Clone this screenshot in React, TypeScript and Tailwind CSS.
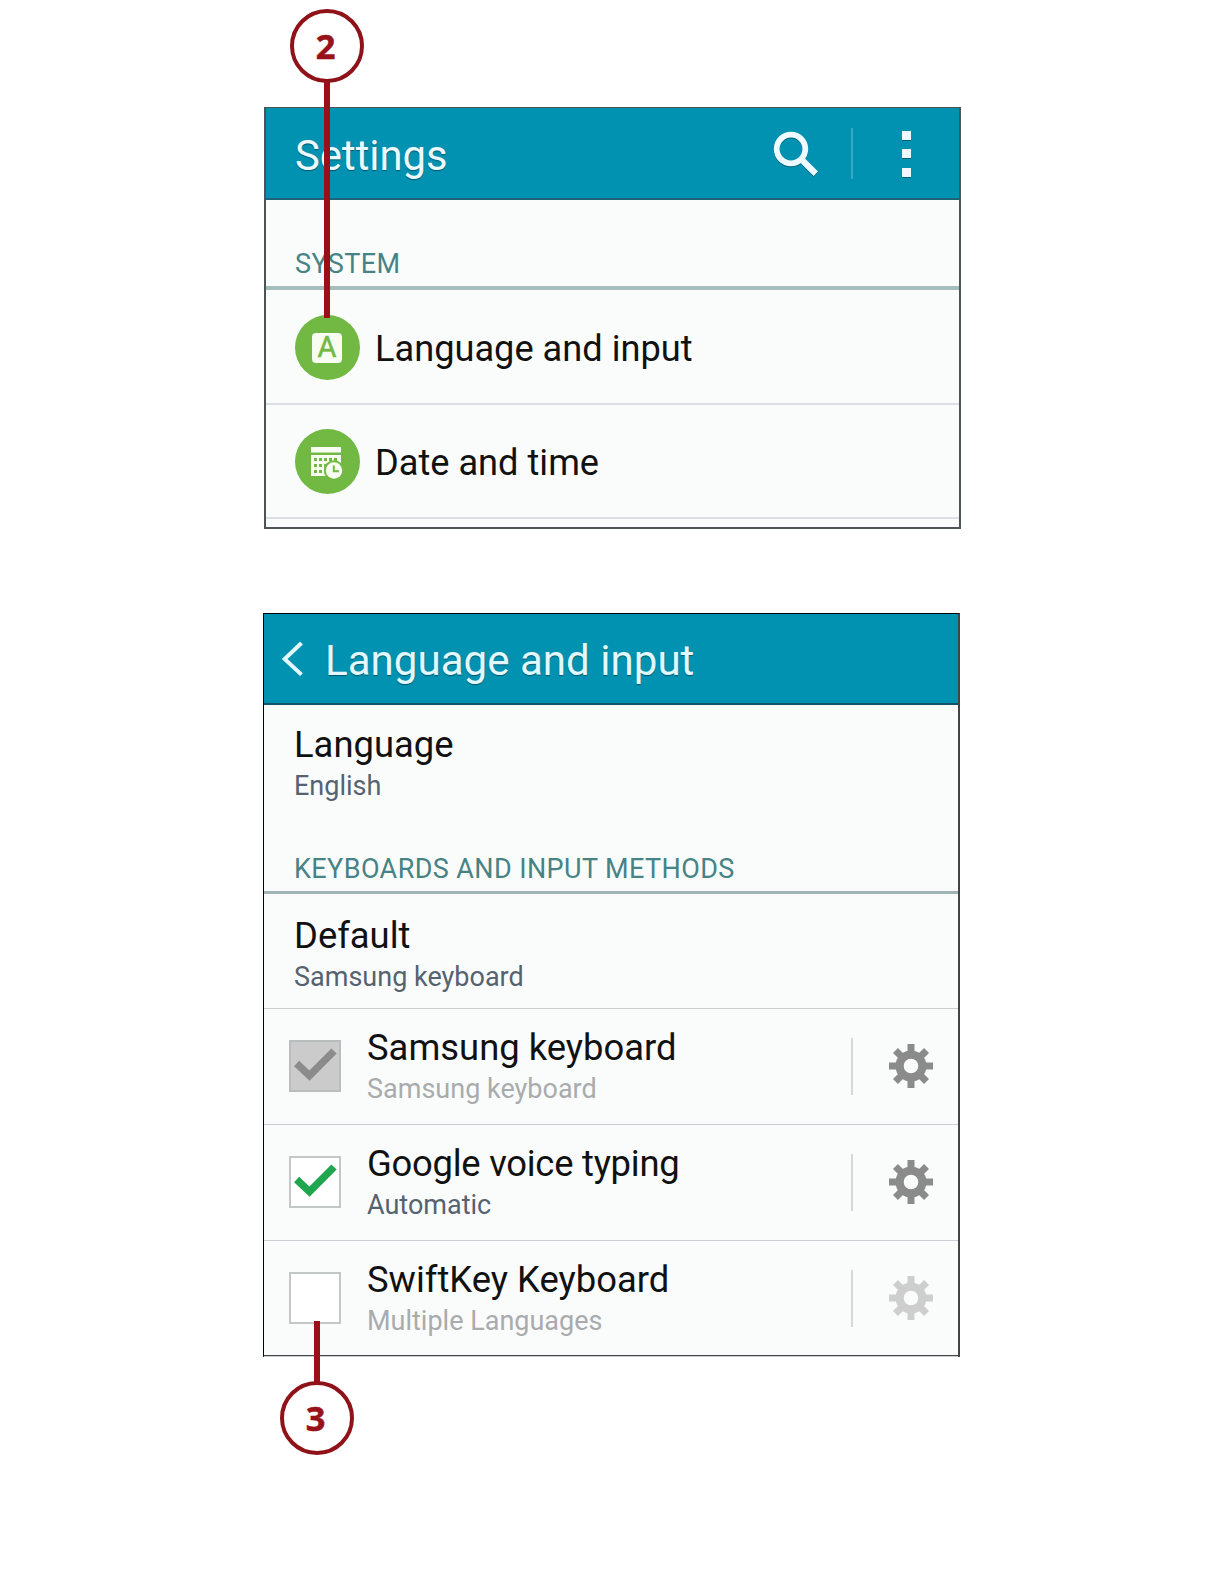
import clsx from "clsx";
import React from "react";

const TEETH = [0, 45, 90, 135, 180, 225, 270, 315];

const GearIcon = ({ className }: { className?: string }) => (
  <svg viewBox="-22 -22 44 44" className={clsx("h-11 w-11", className)}>
    {TEETH.map((deg) => (
      <rect
        key={deg}
        x={-3.5}
        y={-22}
        width={7}
        height={10}
        fill="currentColor"
        transform={`rotate(${deg})`}
      />
    ))}
    <circle r={11.4} fill="none" stroke="currentColor" strokeWidth={8.2} />
  </svg>
);

const SearchIcon = () => (
  <svg
    viewBox="0 0 46 46"
    className="h-[46px] w-[46px] text-[#eefaff] drop-shadow-[0_1px_0_#00627a]"
    fill="none"
    stroke="currentColor"
  >
    <circle cx={18} cy={18} r={14.3} strokeWidth={5.8} />
    <path d="M28.5 28.5 42.8 42.8" strokeWidth={6.2} />
  </svg>
);

const BackIcon = () => (
  <svg
    viewBox="0 0 22 34"
    className="h-[34px] w-[22px] text-[#e2f8fc]"
    fill="none"
    stroke="currentColor"
    strokeWidth={4}
  >
    <path d="M19.5 1 2.6 17 19.5 32.6" />
  </svg>
);

const CalendarIcon = () => (
  <svg viewBox="0 0 32 33" className="h-[33px] w-8">
    <path d="M0 0h30v5.5H0zM0 8h30v21H0z" fill="#f7fdf0" />
    <g fill="#72b944">
      {[3, 8, 13, 18, 23].map((x) => (
        <rect key={x} x={x} y={11} width={3} height={3} />
      ))}
      {[3, 8, 13].map((x) => (
        <rect key={x} x={x} y={17} width={3} height={3} />
      ))}
      {[3, 8].map((x) => (
        <rect key={x} x={x} y={23} width={3} height={3} />
      ))}
      <circle cx={23} cy={23.5} r={10.2} />
    </g>
    <circle cx={23} cy={23.5} r={8.2} fill="#f7fdf0" />
    <path d="M22.8 18.5v5.7H28" fill="none" stroke="#72b944" strokeWidth={2} />
  </svg>
);

const Checkbox = ({ state }: { state: "locked" | "on" | "off" }) => (
  <div
    className={clsx(
      "h-[52px] w-[52px] shrink-0 border-2",
      state === "locked"
        ? "border-[#babdbd] bg-[#cbcbcb] text-[#8b8b8b]"
        : "border-[#c3c7c8] bg-white text-[#1fa64e]",
    )}
  >
    {state !== "off" && (
      <svg viewBox="0 0 48 48" className="h-12 w-12">
        <path
          d="M5.6 21.5 18.5 33.6 43 9"
          fill="none"
          stroke="currentColor"
          strokeWidth={7.4}
        />
      </svg>
    )}
  </div>
);

const Step = ({ children }: { children: React.ReactNode }) => (
  <div className="flex h-[74px] w-[74px] items-center justify-center rounded-full border-4 border-[#8f1219] bg-white pr-[3px] font-['Open_Sans',sans-serif] text-[34.5px] leading-none font-bold text-[#98121a] [-webkit-text-stroke:0.5px_#98121a]">
    {children}
  </div>
);

const Entry = ({
  title,
  detail,
  muted,
  className,
}: {
  title: string;
  detail: string;
  muted?: boolean;
  className?: string;
}) => (
  <div>
    <div className={clsx("text-[36.4px] leading-[45px] text-[#111]", className)}>
      {title}
    </div>
    <div
      className={clsx(
        "text-[27px] leading-[39px]",
        muted ? "text-[#a9abad]" : "text-[#566270]",
      )}
    >
      {detail}
    </div>
  </div>
);

const keyboards = [
  {
    title: "Samsung keyboard",
    detail: "Samsung keyboard",
    state: "locked",
    muted: true,
    gear: "text-[#8b8b8b]",
    tracking: "tracking-normal",
  },
  {
    title: "Google voice typing",
    detail: "Automatic",
    state: "on",
    muted: false,
    gear: "text-[#8b8b8b]",
    tracking: "tracking-[-0.25px]",
  },
  {
    title: "SwiftKey Keyboard",
    detail: "Multiple Languages",
    state: "off",
    muted: true,
    gear: "text-[#cecece]",
    tracking: "tracking-normal",
  },
] as const;

export default function App() {
  return (
    <div className="flex h-[1584px] w-[1224px] flex-col bg-white pt-[107px] font-['Roboto',sans-serif] font-normal whitespace-nowrap">
      {/* Settings */}
      <div className="relative ml-[264px] h-[422px] w-[697px] border-2 border-t border-[#4d5356] bg-[#fafcfc]">
        <div className="flex h-[92px] items-center border-b-2 border-[#1d6478] bg-[#0092b0] pl-[29px]">
          <h1 className="flex-1 pt-[6px] text-[41.8px] leading-[48px] text-[#ecfaff] [text-shadow:0_1px_1px_#00586e]">
            Settings
          </h1>
          <div className="flex items-center pt-px">
            <SearchIcon />
            <div className="ml-[32px] h-[51px] w-[2px] bg-[#35aac4]" />
            <div className="mr-[48px] ml-[49px] flex flex-col gap-[9.5px]">
              <div className="h-[9px] w-[9px] bg-[#eefaff] shadow-[0_1px_0_#00627a]" />
              <div className="h-[9px] w-[9px] bg-[#eefaff] shadow-[0_1px_0_#00627a]" />
              <div className="h-[9px] w-[9px] bg-[#eefaff] shadow-[0_1px_0_#00627a]" />
            </div>
          </div>
        </div>
        <div className="flex h-[90px] items-end border-b-4 border-[#a3bebb] pb-[6px] pl-[29px] text-[27px] leading-[32px] tracking-[0.4px] text-[#468385]">
          SYSTEM
        </div>
        <div className="flex h-[115px] items-center gap-[15.5px] border-b-2 border-[#dcdfe2] pt-[2px] pl-[28.5px]">
          <div className="flex h-[65px] w-[65px] items-center justify-center rounded-full bg-[#72b944]">
            <div className="flex h-[30px] w-[30px] items-center justify-center rounded-[4px] bg-[#f7fdf0] text-[29px] leading-none text-[#72b944] [-webkit-text-stroke:0.5px_#72b944]">
              A
            </div>
          </div>
          <div className="pt-[3px] text-[36.2px] leading-[42px] text-[#111]">
            Language and input
          </div>
        </div>
        <div className="flex h-[114px] items-center gap-[15.5px] border-b-2 border-[#dcdfe2] pl-[28.5px]">
          <div className="flex h-[65px] w-[65px] items-center justify-center rounded-full bg-[#72b944] pt-[4px]">
            <CalendarIcon />
          </div>
          <div className="pt-[3px] text-[36.2px] leading-[42px] text-[#111]">
            Date and time
          </div>
        </div>

        <div className="absolute -top-[99px] left-[24px] flex flex-col items-center">
          <Step>2</Step>
          <div className="-mt-[2px] h-[237px] w-[6px] bg-[#9a0f18]" />
        </div>
      </div>

      {/* Language and input */}
      <div className="relative mt-[84px] ml-[263px] h-[744px] w-[697px] border-t border-r-2 border-b-2 border-l border-t-black border-r-[#444] border-b-[#444] border-l-black bg-[#fafcfc]">
        <div className="flex h-[91px] items-center gap-[21px] border-b-2 border-[#14536a] bg-[#0092b0] pl-[18px]">
          <BackIcon />
          <h1 className="pt-[4px] text-[42.1px] leading-[48px] text-[#e2f8fc] [text-shadow:0_1px_1px_#00586e]">
            Language and input
          </h1>
        </div>
        <div className="h-[117px] pt-[17px] pl-[30px]">
          <Entry title="Language" detail="English" />
        </div>
        <div className="flex h-[72px] items-end border-b-3 border-[#a2b5b5] pb-[6px] pl-[30px] text-[27px] leading-[32px] tracking-[0.4px] text-[#468385]">
          KEYBOARDS AND INPUT METHODS
        </div>
        <div className="h-[115px] border-b border-[#c9cdcf] pt-[19px] pl-[30px]">
          <Entry title="Default" detail="Samsung keyboard" />
        </div>
        {keyboards.map((k) => (
          <div
            key={k.title}
            className="flex h-[116px] items-center border-b border-[#c9cfd3] pr-[25px] pb-px pl-[25px] last-of-type:border-b-0"
          >
            <Checkbox state={k.state} />
            <div className="flex-1 pt-[2px] pl-[26px]">
              <Entry
                title={k.title}
                detail={k.detail}
                muted={k.muted}
                className={k.tracking}
              />
            </div>
            <div className="mr-[36px] h-[57px] w-[2px] bg-[#d6d9dc]" />
            <GearIcon className={k.gear} />
          </div>
        ))}

        <div className="absolute top-[707px] left-[16px] flex flex-col items-center">
          <div className="-mb-px h-[61px] w-[6px] bg-[#9a0f18]" />
          <Step>3</Step>
        </div>
      </div>
    </div>
  );
}
